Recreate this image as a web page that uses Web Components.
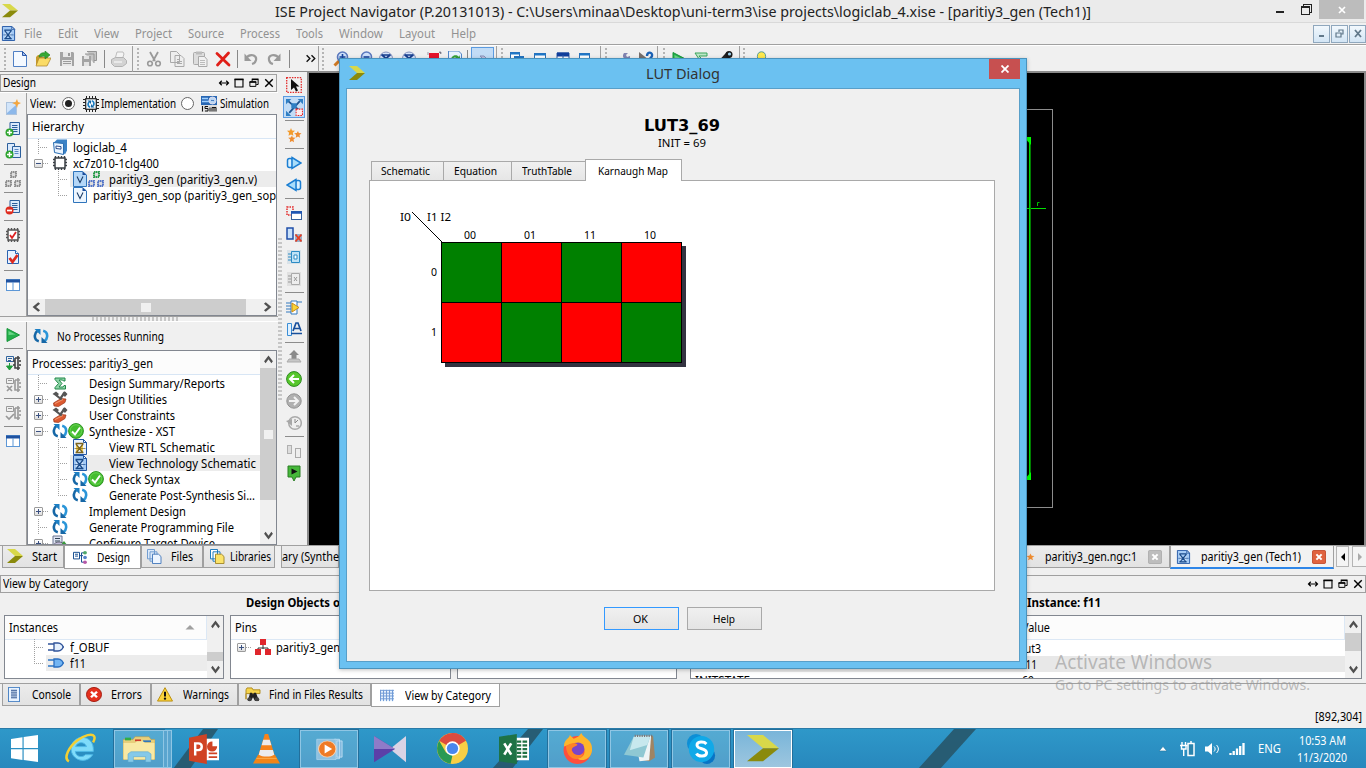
<!DOCTYPE html>
<html lang="en">
<head>
<meta charset="utf-8">
<title>ISE Project Navigator</title>
<style>
html,body{margin:0;padding:0;width:1366px;height:768px;overflow:hidden;background:#f0f0f0}
body{font:12px "Noto Sans","Open Sans",sans-serif;color:#000}
</style>
</head>
<body>
<ise-desktop></ise-desktop>
<script>
const page = (fold, fill) => `<path d="M2.500 1.500h8l3 3v10h-11z" fill="${fill}" stroke="#2a62b0"/><path d="M10.500 1.500v3h3" fill="#fff" stroke="${fold}"/>`;
const textPage = `<path d="M5 1.500h9.500v12H5z" fill="#dbeafc" stroke="#2c5f9c"/><path d="M7 4.500h5.500M7 6.500h5.500M7 8.500h5.500M7 10.500h5.500" stroke="#2c5f9c"/>`;
const plus = `<circle cx="4.500" cy="11.500" r="4" fill="#2fa52f"/><path d="M2 11.500h5M4.500 9v5" stroke="#fff" stroke-width="1.500"/>`;
const chipPins = c => `<path d="M3.500 1v2M6.500 1v2M9.500 1v2M12.500 1v2M3.500 13v2M6.500 13v2M9.500 13v2M12.500 13v2M1 4.500h2M1 7.500h2M1 10.500h2M13 4.500h2M13 7.500h2M13 10.500h2" stroke="${c}" stroke-width="1.400"/><rect x="3" y="3" width="10" height="10" fill="#fff" stroke="${c}" stroke-width="1.500"/>`;
const smallChip = (x, y, c) => `<rect x="${x+1}" y="${y+1}" width="5" height="5" fill="#ddd" stroke="${c}" stroke-width="2" stroke-dasharray="1.500 .5"/>`;
const cycle = `<path d="M5.800 13.300C2.800 12.500 1.600 10 1.900 7.300 2.100 5.300 3 4 4.300 3" fill="none" stroke="#1667a6" stroke-width="2.600"/><path d="M1.500 1h6v6z" fill="#1c7fc4"/><path d="M10.200 2.700c3 .8 4.200 3.300 3.900 6-.2 2-1.100 3.300-2.400 4.300" fill="none" stroke="#2a95d8" stroke-width="2.600"/><path d="M14.500 15h-6V9z" fill="#1667a6"/>`;
const chevron = `<path d="M0 0h8l8 7.500H8z" fill="#d8d84a"/><path d="M8 7.500h8L8 15H0z" fill="#8a8a0c"/>`;
const schem = (c, f, l) => `<path d="M1.500.5h10l3 3v12h-13z" fill="${f}" stroke="#2156a5"/><path d="M11.500.5v3h3z" fill="#fff" stroke="#2156a5"/><path d="M3.500 4.500h8M4 5l3.500 4.500L4 14M11 5L7.500 9.500 11 14M3.500 13.500h8" fill="${c}" stroke="${l}" stroke-width="1.300"/><path d="M2.500 9.500h11" stroke="${l}" stroke-width=".7"/>`;
const zoomGlass = `<path d="M1.500 14.500l6-6" stroke="#d27a22" stroke-width="3"/><circle cx="9.500" cy="6" r="5" fill="#cfe0fa" stroke="#5a78bd" stroke-width="1.600"/>`;
const windowShape = (x,y,w,h) => `<rect x="${x}" y="${y}" width="${w}" height="${h}" fill="#fff" stroke="#2c70b7"/><path d="M${x} ${y+1}h${w}" stroke="#1f78c8" stroke-width="2"/>`;
const ICONS = {
 ise: chevron,
 newDoc: `<path d="M1.500.5h9l4 4v11h-13z" fill="#f4f9ff" stroke="#4f7fc4"/><path d="M10.500.5v4h4z" fill="#9fc0f0" stroke="#2b57a8"/>`,
 open: `<path d="M1 6l2-2h3l1 2h6v8H1z" fill="#c89b2c"/><path d="M1 15l3-8h12l-4 8z" fill="#fadb66" stroke="#a9832c" stroke-width=".7"/><path d="M4 6c0-3 3-5 6-4V0l5 4-5 4V5.500C7.500 5 6 6 4 6z" fill="#35a834" stroke="#1f7d24" stroke-width=".6"/>`,
 save: `<path d="M1 1h13l1 1v13H1z" fill="#a4a4a4"/><path d="M4 1h8v5H4zM3 9h10v6H3z" fill="#e8e8e8"/><path d="M4 10.500h8M4 12.500h8" stroke="#9b9b9b"/><path d="M9 2h2v3H9z" fill="#999"/>`,
 saveAll: `<path d="M6 .5h9.500v9H13M4 3h9v9" fill="#c5c5c5" stroke="#959595"/><path d="M1 5h9v10H1z" fill="#a4a4a4"/><path d="M3 5h5v3H3zM3 11h5v4H3z" fill="#e3e3e3"/>`,
 print: `<path d="M4 8L6 1h6l1 2-2 6z" fill="#f4f4f4" stroke="#bdbdbd"/><path d="M.5 8.500l4-2h8l3 3v3l-4 3h-8l-3-3z" fill="#d3d3d3" stroke="#b2b2b2"/><path d="M3 11h8" stroke="#fff"/>`,
 cut: `<path d="M4 1l5 9M12 1L7 10" stroke="#999" stroke-width="1.800"/><circle cx="4" cy="12.500" r="2.300" fill="none" stroke="#999" stroke-width="1.600"/><circle cx="12" cy="12.500" r="2.300" fill="none" stroke="#999" stroke-width="1.600"/>`,
 copy: `<path d="M1.500.5h6l3 3v8h-9zM6 4.500h6l3 3v8H6z" fill="#eee" stroke="#a9a9a9"/><path d="M8 8.500h3M8 10.500h5M8 12.500h5" stroke="#aaa"/>`,
 paste: `<rect x="1.500" y="1.500" width="11" height="12" rx="1" fill="#ddd" stroke="#aaa"/><path d="M4 .5h6v3H4z" fill="#bbb"/><path d="M6.500 5.500h6l2.500 3v7H6.500z" fill="#f1f1f1" stroke="#a9a9a9"/><path d="M8 9.500h5M8 11.500h5M8 13.500h5" stroke="#bbb"/>`,
 del: `<path d="M2 2.500l12 11.500M13.500 2L2.500 14" stroke="#e01f18" stroke-width="2.800" stroke-linecap="round"/>`,
 undo: `<path d="M3 7c4-5 11-3 10 2-.4 2-2 3.500-4 4" fill="none" stroke="#9a9a9a" stroke-width="2.200"/><path d="M1.500 2.500v7.500h7z" fill="#9a9a9a"/>`,
 redo: `<path d="M13 7C9 2 2 4 3 9c.4 2 2 3.500 4 4" fill="none" stroke="#9a9a9a" stroke-width="2.200"/><path d="M14.500 2.500v7.500h-7z" fill="#9a9a9a"/>`,
 more: `<path d="M2 4l4 4-4 4M8 4l4 4-4 4" fill="none" stroke="#111" stroke-width="1.700"/>`,
 zoomIn: zoomGlass + `<path d="M6.500 6h6M9.500 3v6" stroke="#17439d" stroke-width="1.600"/>`,
 zoomOut: zoomGlass + `<path d="M6.500 6h6" stroke="#17439d" stroke-width="1.600"/>`,
 zoomFit: `<circle cx="8" cy="7.500" r="6.500" fill="#d6e4fa" stroke="#8592bd"/><path d="M3.500 3.500l9 8M12.500 3.500l-9 8M4 4h8" stroke="#183f8f" stroke-width="1.700"/>`,
 stopRed: `<path d="M3 2h10v10H3z" fill="#e4142c"/><path d="M2 1v3M13 1h2v2" stroke="#99a"/>`,
 refreshDoc: `<path d="M1.500 0h10l3 3v12h-13z" fill="#e8f2ff" stroke="#5386c7"/><path d="M4 9c0-5 6-6 8-3l1-2v5H8l2-1.500C8 6 6 6 6 9z" fill="#36a03a"/>`,
 arrowPale: `<path d="M5 5h4l5 5-5 5H5l5-5z" fill="#c0c0df" stroke="#8790b9"/>`,
 cascade: windowShape(1.500,1.500,9,7)+windowShape(5.500,5.500,9,8),
 winOne: windowShape(2.500,2.500,11,10),
 winSplit: `<path d="M2 2h12v12H2z" fill="#fff" stroke="#2a5ba6"/><path d="M2 3.500h12" stroke="#123e9b" stroke-width="4"/><path d="M8 4v10" stroke="#2a5ba6"/>`,
 winOut: windowShape(1.500,2.500,10,7)+`<path d="M9 8h6v5H9z" fill="#fff" stroke="#2c70b7"/>`,
 wrench: `<path d="M3 15l6-7" stroke="#8588b5" stroke-width="3"/><path d="M8 2c-3 4 1 8 6 6V5l-3 1-1-2 2-2z" fill="#8184b1"/>`,
 whatsThis: `<path d="M1 1v12l4-3 2 4 2-1-2-4h4z" fill="#77706c"/><path d="M9 5c0-5 6-4 5 0-.5 2-2.500 2-2.500 4" fill="none" stroke="#1b61b4" stroke-width="2.400"/>`,
 play: `<path d="M2 1.500L14.500 8 2 14.500z" fill="#24b04b" stroke="#17963a"/><path d="M3.500 4l7 3.500-7 .5z" fill="#6bd688"/>`,
 sigmaTop: `<path d="M2 2h12v3H6l3 3-3 4h8v2H2l4-6z" fill="#bce7c8" stroke="#3aa45b"/>`,
 flashlight: `<path d="M2 14L12 3" stroke="#222" stroke-width="6"/><circle cx="12" cy="3.500" r="3.500" fill="#1a1a1a"/><circle cx="12.500" cy="3" r="1.600" fill="#9fd3ee"/>`,
 bulb: `<path d="M5 13c0-3-3-4-3-7.500C2 2 5 .8 8 .8s6 1.200 6 4.700C14 9 11 10 11 13z" fill="#ffe84d" stroke="#3b8fa0"/><path d="M5 14h6" stroke="#888" stroke-width="2"/>`,
 dots: `<path d="M8 0v16" stroke="#b4b4b4" stroke-width="4" stroke-dasharray="1.400 1.500"/>`,
 newSource: `<rect x="1.500" y="3.500" width="10" height="12" fill="#8db8ea" stroke="#adc3dd"/><path d="M2 4l9 0v2L2 14z" fill="#d2e5fa"/><path d="M12 0l1 3 3 1-3 1.500L12 9l-1.500-3.500L7 4l3.500-1z" fill="#f4a63f"/>`,
 addSource: textPage + plus,
 addCopy: `<path d="M2.500.5h7v11h-7z" fill="#dbeafc" stroke="#2c5f9c"/><path d="M7.500 3.500h8v11h-8z" fill="#dbeafc" stroke="#2c5f9c"/><path d="M9.500 6.500h4M9.500 8.500h4M9.500 10.500h4" stroke="#5a8ac4"/>` + plus,
 hierGrey: smallChip(5,0,'#8e8e8e')+smallChip(0,9,'#8e8e8e')+smallChip(9,9,'#8e8e8e'),
 remove: textPage + `<circle cx="4.500" cy="11.500" r="4" fill="#df2c1f"/><path d="M2 11.500h5" stroke="#fff" stroke-width="1.700"/>`,
 chipCheck: chipPins('#555') + `<path d="M5 8l2 3 4-6" fill="none" stroke="#d22" stroke-width="1.800"/>`,
 chip: chipPins('#3a3f44'),
 docCheck: page('#2a62b0','#e8f2ff') + `<path d="M4.500 9l3 4 5-7" fill="none" stroke="#dd2b20" stroke-width="2.800"/>`,
 columns: `<rect x="1.500" y="2.500" width="13" height="11" fill="#fff" stroke="#5d97d6"/><path d="M1 4h14" stroke="#1f52a0" stroke-width="3"/><path d="M8 5v9" stroke="#5d97d6"/>`,
 impl: `<path d="M3.500 0v3M6.500 0v3M9.500 0v3M12.500 0v3M3.500 13v3M6.500 13v3M9.500 13v3M12.500 13v3M0 3.500h3M0 6.500h3M0 9.500h3M0 12.500h3M13 3.500h3M13 6.500h3M13 9.500h3M13 12.500h3" stroke="#222"/><rect x="2.700" y="2.700" width="10.600" height="10.600" fill="#f2f8fd" stroke="#222" stroke-width="1.200"/><path d="M7.200 11.300C4.500 10.500 4.700 7.500 6 6M8.800 4.700c2.700.8 2.500 3.800 1.200 5.300" fill="none" stroke="#1c7fc4" stroke-width="1.700"/><path d="M4.500 4.500H8V8zM11.500 11.500H8V8z" fill="#1667a6"/>`,
 sim: `<rect width="16" height="9" fill="#2867b4"/><path d="M1 2.500h6M1 5.500h7" stroke="#9ed0ff" stroke-width="1.500"/><circle cx="11.500" cy="4.500" r="3.500" fill="#bdd7f3" stroke="#dde"/><path d="M10 5c1-2 2 1 3-1" stroke="#2867b4" fill="none"/><rect y="9" width="16" height="7" fill="#ddd"/><path d="M1.500 10v5.500M7 10.500H4v2h3v2.500H4M9 15.500v-4M11 15.500v-4h4v4M13 12v3.500" fill="none" stroke="#111"/>`,
 project: `<path d="M2 3.500l3-3h10v11l-2 4z" fill="#3b82c6"/><path d="M1.500 3.500l10 1v11l-9-2z" fill="#e9f4ff" stroke="#2a6eb2"/><path d="M4 7l5 .6v2.500L4 9.500z" fill="#fff" stroke="#2a4d8e"/>`,
 verilog: `<path d="M1.500.5h9l4 3.500v11.500h-13z" fill="#b4d7f8" stroke="#2f74bb"/><path d="M10.500.5V4h4z" fill="#1b4d9c"/><path d="M5 5.500l3 6 3-6" fill="none" stroke="#1c3d68" stroke-width="1.100"/>`,
 verilogW: `<path d="M1.500.5h9l4 3.500v11.500h-13z" fill="#edf6ff" stroke="#2f74bb"/><path d="M10.500.5V4h4z" fill="#1b4d9c"/><path d="M5 5.500l3 6 3-6" fill="none" stroke="#1c3d68" stroke-width="1.100"/>`,
 hier: smallChip(5,0,'#2a9c4a')+smallChip(0,9,'#5677c8')+smallChip(9,9,'#5677c8'),
 cycle, 
 sigma: `<path d="M3 3h10v3h-1.500l-1-1H7l3 3.500L7 12h4l1-1.500h1.500V14H3v-1.500L6.500 8.500 3 4.500z" fill="#8fd6a8" stroke="#23874a"/>`,
 tools: `<path d="M1.500 12L9 7.500l5 .5-1 3.500L6.500 15.500 2 15z" fill="#dd5a30" stroke="#9a3418" stroke-width=".7"/><path d="M4 4l6 5M13 1L8 8" stroke="#555" stroke-width="2.200"/><path d="M.5 3L4 .5 7 3 4.500 5.500zM10.500 2L13 .5 15.500 3 13 6l-1.500-1.500z" fill="#555"/><path d="M3 12.500l8-4" stroke="#f59a72"/>`,
 check: `<circle cx="8" cy="8" r="7.400" fill="#44bd2f" stroke="#2b9420"/><circle cx="8" cy="7.500" r="5.800" fill="none" stroke="#79dd61" stroke-width=".7"/><path d="M4 8.500l3 3 5-7" fill="none" stroke="#fff" stroke-width="2"/>`,
 rtl: schem('#f6cf4e','#eaf3ff','#7b6420'), tech: schem('#cfe3fb','#a5cbf5','#1b4b8a'),
 config: `<path d="M1 1h9v9H1z" fill="#dfe4f3" stroke="#6a7590"/><path d="M3 3.500h5M3 6h5" stroke="#345"/><ellipse cx="7" cy="10" rx="5" ry="3" fill="#c3bcdc" stroke="#667"/><path d="M12 6l4 5h-8z" fill="#399a3c"/>`,
 procGo: `<path d="M1.500 1.500h7v5h-7zM3 3.500h4M3 5.500h3" fill="none" stroke="#31659e"/><path d="M10 3h5M10 3v10h5M13 1v14" fill="none" stroke="#444" stroke-width="1.600"/><path d="M15 5v2M15 9v2M9 5v2M9 9v2" stroke="#444" stroke-width="1.600"/><path d="M4.500 8v5M1.500 11l3 4 3-4z" fill="#1f9b3a" stroke="#1f9b3a"/>`,
 procX: `<path d="M1.500 1.500h7v5h-7zM3 3.500h4" fill="none" stroke="#999"/><path d="M10 3h5M10 3v10h5M13 1v14M15 5v2M15 9v2" fill="none" stroke="#999" stroke-width="1.600"/><path d="M2 9l5 5M7 9l-5 5" stroke="#999" stroke-width="1.700"/>`,
 procOk: `<path d="M1.500 1.500h7v5h-7zM3 3.500h4" fill="none" stroke="#999"/><path d="M10 3h5M10 3v10h5M13 1v14M15 5v2M15 9v2" fill="none" stroke="#999" stroke-width="1.600"/><path d="M1 11l3 3 5-5" fill="none" stroke="#999" stroke-width="1.700"/>`,
 pointer: `<rect x=".7" y=".7" width="14.600" height="14.600" fill="none" stroke="#e22b2b" stroke-width="1.300" stroke-dasharray="1.500 1.100"/><path d="M5 2v11l3-2.500 2 4 2-1-2-4h3.500z" fill="#111"/>`,
 spread: `<path d="M2 2l11 9M13 2L3 13" stroke="#1e5391" stroke-width="1.700"/><path d="M0 0h5L0 5zM16 0h-5l5 5zM0 16h5l-5-5zM5 4h5v5H5z" fill="#2f7fc4"/><rect x="9.500" y="9.500" width="6" height="6" fill="#fee" stroke="#e22" stroke-dasharray="1.500 1"/>`,
 stars: `<path d="M5 1l1 2.500 3 .3-2.200 2 .6 3L5 7.500l-2.500 1.300.6-3L1 3.800l3-.3z" fill="#f39b2b"/><path d="M12 4l.8 2 2.700.3-2 1.700.5 2.700-2-1.200-2.300 1.200.5-2.700-2-1.700 2.600-.3zM6 8.500l.8 2 2.700.3-2 1.700.5 2.700-2-1.200-2.300 1.200.5-2.700-2-1.700 2.600-.3z" fill="#ee8c30"/>`,
 star: `<path d="M8 1l2 4.500 5 .5-4 3.500 1.500 5L8 12l-4.500 2.500 1.500-5L1 6l5-.5z" fill="#ee8c30"/>`,
 fwd: `<rect x="1.500" y="3.500" width="5" height="9" rx="2" fill="#d9f1ff" stroke="#1b7ed2" stroke-width="1.500"/><path d="M6 2.500L15 8 6 13.500z" fill="#a9ddfa" stroke="#1b7ed2" stroke-width="1.500"/>`,
 back: `<rect x="9.500" y="3.500" width="5" height="9" rx="2" fill="#d9f1ff" stroke="#1b7ed2" stroke-width="1.500"/><path d="M10 2.500L1 8l9 5.500z" fill="#a9ddfa" stroke="#1b7ed2" stroke-width="1.500"/>`,
 boxWin: `<rect x="1" y="2" width="6" height="8" fill="none" stroke="#e22b2b" stroke-width="1.500" stroke-dasharray="1.500 1"/><rect x="5.500" y="6.500" width="10" height="8" fill="#fff" stroke="#355f9c"/><path d="M5 7.500h11" stroke="#1f56b4" stroke-width="2.500"/>`,
 boxX: `<rect x="1" y="1" width="6" height="11" fill="#c9e1fa" stroke="#1f4ea8" stroke-width="1.500"/><rect x="9" y="7" width="7" height="8" fill="#9ab0c8"/><path d="M9.500 7.500l6 7M15.500 7.500l-6 7" stroke="#ea3d20" stroke-width="1.800"/>`,
 chipIn: `<path d="M1 1h14v14H1z" fill="#d9e2e8"/><path d="M2 5h4M2 8h4M2 11h4" stroke="#2c8bc4"/><path d="M5.500 2.500h8v11h-8z" fill="#bfe2f6" stroke="#2c8bc4"/><path d="M8 6h3v4H8z" fill="#fff" stroke="#2c8bc4"/>`,
 chipInG: `<path d="M1 1h14v14H1z" fill="#e0e0e0"/><path d="M2 5h4M2 8h4M2 11h4" stroke="#999"/><path d="M5.500 2.500h8v11h-8z" fill="#eee" stroke="#aaa"/><path d="M8 6l3 4M11 6l-3 4" stroke="#999"/>`,
 gate: `<path d="M0 4h5M0 7h5M0 10h5M0 13h5M11 3h5" stroke="#3378be"/><path d="M5 2h6v13H5z" fill="#fff" stroke="#3378be"/><path d="M6 4l7 4.500L6 13z" fill="#f7d438" stroke="#cc8a17"/>`,
 label: `<path d="M1.500 2.500h4v12h-4z" fill="#dff0ff" stroke="#3a8ed6"/><path d="M7 10l3-8h2l3 8M8.500 7.500h5M5 12.500h11" fill="none" stroke="#174f9c" stroke-width="1.700"/>`,
 up: `<path d="M8 1l5 5h-2.500v5h-5V6H3z" fill="#8a8a8a"/><path d="M1 13l2-3h10l2 3z" fill="#c7c7c7" stroke="#aaa"/>`,
 left: `<circle cx="8" cy="8" r="7.400" fill="#57c72c" stroke="#2e8a21"/><path d="M13 8H4M8 4L4 8l4 4" fill="none" stroke="#fff" stroke-width="2"/>`,
 right: `<circle cx="8" cy="8" r="7.200" fill="#b0b0b0" stroke="#929292"/><path d="M3 8h9M8 4l4 4-4 4" fill="none" stroke="#f2f2f2" stroke-width="2"/>`,
 history: `<circle cx="9" cy="8" r="6.300" fill="#eee" stroke="#aaa" stroke-width="1.500"/><path d="M9 4v4l3-3M10 11h3" fill="none" stroke="#888"/><path d="M0 6l6-2v7z" fill="#a7a7a7"/>`,
 pair: `<rect x="1.500" y="2.500" width="4" height="8" fill="#ddd" stroke="#b0b0b0"/><rect x="9.500" y="5.500" width="5" height="9" fill="#eee" stroke="#aaa"/>`,
 pin: `<path d="M2 1h12v11h-4l-2 4-2-4H2z" fill="#46b83a" stroke="#2b7e25"/><path d="M5.500 3.500l6 3-6 3z" fill="#111"/>`,
 designTab: `<path d="M1.500 2.500h6v7h-6z" fill="#fff" stroke="#174d8f"/><path d="M3 4.500h3M3 6.500h3M8 6h3M9.500 6v-3M9.500 3h3M9.500 6v7h3" fill="none" stroke="#174d8f"/><circle cx="13" cy="3" r="1.900" fill="#50a86a"/><circle cx="13" cy="8" r="1.900" fill="#5683cb"/><circle cx="13" cy="13" r="1.900" fill="#b557a7"/>`,
 files: `<path d="M1.500.5h7v10h-7zM4 3h7v10H4z" fill="#dceafa" stroke="#6f9bd0"/><path d="M6.500 5.500h6l2.500 2.500v7.500H6.500z" fill="#edf5ff" stroke="#4a7dbd"/>`,
 libs: `<path d="M1.500.5h7v10h-7zM4 3h7v10H4z" fill="#fff" stroke="#1a78bd"/><path d="M6.500 5.500h6l2.500 2.500v7.500H6.500z" fill="#fbe36a" stroke="#a58a2c"/>`,
 nor: `<path d="M0 5h7M0 11h7M13 8h3" stroke="#31549a" stroke-width="1.500"/><path d="M6 4h4c3 0 5 2.500 5 4s-2 4-5 4H6z" fill="#e5f0fd" stroke="#31549a" stroke-width="1.300"/>`,
 norSel: `<path d="M0 5h7M0 11h7M13 8h3" stroke="#2a76c6" stroke-width="1.500"/><path d="M6 4h4c3 0 5 2.500 5 4s-2 4-5 4H6z" fill="#73b5f3" stroke="#2a6ec0" stroke-width="1.300"/>`,
 pins: `<path d="M8 6v4M3 11V9h10v2" fill="none" stroke="#333"/><rect x="5" y="0" width="6" height="6" fill="#e0262c"/><rect x="0" y="10" width="6" height="6" fill="#e0262c"/><rect x="10" y="10" width="6" height="6" fill="#e0262c"/>`,
 console: `<rect x="2.500" y=".5" width="11" height="15" fill="#e8f3ff" stroke="#4f86c6"/><path d="M5 3.500h6M5 5.500h6M5 7.500h6M5 9.500h6M5 11.500h6" stroke="#274e8c"/>`,
 error: `<circle cx="8" cy="8" r="7.500" fill="#e5301d" stroke="#a31b10"/><path d="M5 5l6 6M11 5l-6 6" stroke="#fff" stroke-width="2.400"/>`,
 warn: `<path d="M8 .7L15.500 15H.5z" fill="#fbd43c" stroke="#b98d10"/><path d="M8 5v5" stroke="#111" stroke-width="2"/><circle cx="8" cy="12.500" r="1.200" fill="#111"/>`,
 find: `<path d="M1 3l1-2h5l1 2h7v4H1v6z" fill="#f6d44b" stroke="#b18c20"/><path d="M3 15l2-9h2l1 2 1-2h2l3 9h-4l-2-4-2 4z" fill="#222"/><circle cx="4.500" cy="13" r="2.200" fill="#444"/><circle cx="12" cy="13" r="2.200" fill="#444"/>`,
 grid: `<rect x="1" y="2" width="14" height="12" fill="#e6f1fd"/><path d="M1 2.500h14M1 5.500h14M1 8.500h14M1 11.500h14M1.500 2v12M4.500 2v12M7.500 2v12M10.500 2v12M13.500 2v12" stroke="#6f9ad6"/>`,
 xGrey: `<rect x=".5" y=".5" width="15" height="15" rx="1.500" fill="#bdbdbd" stroke="#aaa"/><path d="M5 5l6 6M11 5l-6 6" stroke="#fff" stroke-width="2.400"/>`,
 xRed: `<rect x=".5" y=".5" width="15" height="15" rx="1.500" fill="#e0633f" stroke="#c04425"/><path d="M5 5l6 6M11 5l-6 6" stroke="#fff" stroke-width="2.400"/>`,
 fit: `<path d="M2 8h12M5 5L2 8l3 3M11 5l3 3-3 3" fill="none" stroke="#000" stroke-width="1.600"/>`,
 max: `<path d="M2.700 3h10.600v10.300H2.700z" fill="none" stroke="#000" stroke-width="1.500"/><path d="M2 3.300h12" stroke="#000" stroke-width="2"/>`,
 restore: `<path d="M5.500 6V3.500h8v6.500H11M2.500 6.500h8v6h-8z" fill="none" stroke="#000" stroke-width="1.300"/><path d="M5 3h9M2 6.500h9" stroke="#000" stroke-width="2"/>`,
 close: `<path d="M3 3l10 10M13 3L3 13" stroke="#000" stroke-width="1.900"/>`,
 up2: `<path d="M3.500 10.500L8 6l4.500 4.500" fill="none" stroke="#505050" stroke-width="2.600"/>`,
 down2: `<path d="M3.500 5.500L8 10l4.500-4.500" fill="none" stroke="#505050" stroke-width="2.600"/>`,
 left2: `<path d="M10.500 3.500L6 8l4.500 4.500" fill="none" stroke="#505050" stroke-width="2.400"/>`,
 right2: `<path d="M5.500 3.500L10 8l-4.500 4.500" fill="none" stroke="#505050" stroke-width="2.400"/>`,
 windows: `<path d="M0 2.300L6.800 1.300v6.400H0zM7.500 1.200L16 0v7.700H7.500zM0 8.400h6.800v6.400L0 13.800zM7.500 8.400H16V16l-8.500-1.200z" fill="#fff"/>`,
 ie: `<path d="M8.300 2.200a6 6 0 1 0 6 9h-3.800c-1.500 1.700-4.900 1.200-5.200-1.700h9.300C15 5 12.500 2.200 8.300 2.200zM5.500 7c.6-2.600 4.800-2.800 5.600 0z" fill="#7fdcfa" stroke="#4db8e6" stroke-width=".5"/><path d="M2 14.700C-1 13 2 7 6.500 3.700 10 1.200 14 0 15 1.600c.5.800.2 2-.5 3.200" fill="none" stroke="#f3cf33" stroke-width="1.300"/>`,
 explorer: `<path d="M0 3h5l1-1.500h7L14 3h2v11H0z" fill="#e7cf7b" stroke="#b89c48" stroke-width=".3"/><path d="M1 2h3v1.500H1z" fill="#32ad44"/><path d="M6 3h3v1H6z" fill="#cf3b2c"/><path d="M10 3.500h4v1h-4z" fill="#2e77bd"/><path d="M.3 5H6l1-1h3l1 1h4.700v9H.3z" fill="#f8e9a4"/><path d="M2.500 15.500V11l1.500-1.200h8.500L14 11v4.500h-2.700v-3H5.200v3z" fill="#85c9e8" stroke="#5aa6cf" stroke-width=".3"/>`,
 ppt: `<rect x="9" y="2.500" width="7" height="11.500" fill="#fff"/><path d="M0 2L9.500 0v16L0 14.200z" fill="#d04324"/><path d="M3.300 11.500v-6.500h1.700c2.400 0 2.400 3.600 0 3.600H3.300" fill="none" stroke="#fff" stroke-width="1.300"/><path d="M12.500 4v2.500H15A2.700 2.700 0 1 1 12.500 4z" fill="#d04324"/><path d="M10.500 10.300H15M10.500 12.300H15" stroke="#d04324"/>`,
 vlc: `<path d="M3 11h10l3 4.700H0z" fill="#f28518"/><path d="M2 13h12" stroke="#ffb04f" stroke-width=".5"/><path d="M7 0h2l3.700 11c-2 2-7.300 2-9.400 0z" fill="#f6831a"/><path d="M6.100 3h3.800l1 3H5.100zM4.200 8.500h7.600l.8 2.500c-2 1.400-7 1.400-9.200 0z" fill="#ececec"/>`,
 media: `<path d="M11 2h3v12h-3zM12.500 3h3v10h-3z" fill="#83badf" stroke="#d4ecfb" stroke-width=".4"/><path d="M1 2h11v12.500H1z" fill="#8dc0e0" stroke="#b3d8ee" stroke-width=".4"/><circle cx="7" cy="8" r="5" fill="#ef7a24" stroke="#f7d3b4" stroke-width=".6"/><path d="M5.500 5.200L9.800 8l-4.300 2.800z" fill="#fff"/>`,
 km: `<path d="M16 .5v15L8 8z" fill="#d9d3e5"/><path d="M0 .5L10.500 8 0 15.500z" fill="#5b3fa8"/><path d="M0 .5L10.500 8 0 8z" fill="#8f7bc8"/>`,
 chrome: `<circle cx="8" cy="8" r="8" fill="#f8cf45"/><path d="M8 8L1.100 4A8 8 0 0 1 14.900 4z" fill="#dc4b3f"/><path d="M8 0a8 8 0 0 1 6.900 4H8z" fill="#dc4b3f"/><path d="M1.100 4L4.600 10 8 11.500 7 15.900A8 8 0 0 1 1.100 4z" fill="#2a9a54"/><circle cx="8" cy="8" r="3.700" fill="#fff"/><circle cx="8" cy="8" r="2.900" fill="#4a87ee"/>`,
 excel: `<rect x="8.500" y="2" width="7.500" height="12" fill="#fff"/><path d="M9.500 4H15M9.500 6H15M9.500 8H15M9.500 10H15M9.500 12H15" stroke="#207245" stroke-width="1.200"/><path d="M12.200 3v10" stroke="#fff" stroke-width=".7"/><path d="M0 1.500L9.500 0v16L0 14.500z" fill="#1e7346"/><path d="M2.800 5l3.700 6M6.500 5l-3.700 6" stroke="#fff" stroke-width="1.400"/>`,
 firefox: `<circle cx="8" cy="8.800" r="7.200" fill="#ff4f3c"/><path d="M1 7C1 3 4 3 4 1l2 2c3-1 3-2 4-3 1 3 6 3 5.500 9-.5 5-6 6-7.500 4 5 0 5-7-1-8z" fill="#ffb52b"/><circle cx="8.300" cy="8.200" r="3.300" fill="#7b45c9"/><path d="M2 7c2-2 5-2 6-1-1 1-3 1-3 3 1 3 5 3 6 1 0 4-8 6-9-3z" fill="#ff8326"/>`,
 notepad: `<path d="M6 1h9l1 12-3 2-4-.5z" fill="#9f8464"/><path d="M5.500 1H14l-1 13.500-5 .5z" fill="#eef4f6"/><path d="M5 1.500h8.500L10 13 0 11.500z" fill="#8fc8d3"/><path d="M5 1.500h8.500L12 6 3 9z" fill="#c7e8ee"/><path d="M5.500 1h9" stroke="#777" stroke-width="1.200" stroke-dasharray=".6 .6"/>`,
 skype: `<circle cx="5" cy="5" r="5" fill="#0d8fd6"/><circle cx="11" cy="11.500" r="4.500" fill="#0874c5"/><circle cx="8" cy="8" r="7" fill="#10a9e8"/><path d="M10.700 5.300C9.300 3.700 5.400 4 5.500 6c.2 2.500 5.300 1.300 5.300 4 0 2.200-4.500 2.400-5.600.4" fill="none" stroke="#fff" stroke-width="1.600"/>`,
 trayUp: `<path d="M2 11L8 4l6 7z" fill="#fff" stroke="#1b6c96" stroke-width=".8"/>`,
 battery: `<rect x="8" y="2.500" width="6" height="12" fill="#2b83ad" stroke="#fff" stroke-width="1.500"/><path d="M10 1h2" stroke="#fff" stroke-width="1.500"/><path d="M2 1v3M5.500 1v3M0 4.500h7.500M1.500 5v3h4.500V5M3.700 8v7" fill="none" stroke="#fff" stroke-width="1.400"/>`,
 speaker: `<path d="M1 5.500h3L8 2v12l-4-3.500H1z" fill="#fff"/><path d="M10 5.500c1.500 1.500 1.500 3.500 0 5M12.500 4c2.500 2.500 2.500 5.500 0 8" fill="none" stroke="#fff"/>`,
 signal: `<path d="M1.500 14v-2M4.700 14v-4M8 14V7.500M11.200 14V5M14.500 14V2" stroke="#fff" stroke-width="2.300"/>`,
 tri: `<path d="M8 4l6 6H2z" fill="#a0a0a0"/>`
};

/* Element whose shadow root is filled from its own render() */
class Base extends HTMLElement {
  connectedCallback() {
    if (this.shadowRoot) return;
    this.attachShadow({mode: 'open'}).innerHTML = `<style>:host{display:block;box-sizing:border-box}*{box-sizing:border-box}${this.css ? this.css() : ''}</style>` + this.render();
    if (this.ready) this.ready();
  }
  a(name, fallback = '') { return this.getAttribute(name) ?? fallback; }
}
const def = (n, c) => customElements.define(n, c);

/* Label condensed or widened so that it fills a given width */
def('fit-text', class extends Base {
  css() { return `:host{display:inline-block;white-space:pre;flex:none}span{display:inline-block;transform-origin:0 50%}`; }
  render() { return `<span><slot></slot></span>`; }
  ready() {
    const want = +this.a('w', 0); if (!want) return;
    const span = this.shadowRoot.querySelector('span');
    span.style.transform = `scaleX(${want / span.getBoundingClientRect().width})`;
    this.style.width = want + 'px';
  }
});
const T = (w, s) => `<fit-text w="${w}">${s}</fit-text>`;

def('ui-icon', class extends Base {
  css() { const w = this.a('w', 16), h = this.a('h', w); return `:host{width:${w}px;height:${h}px;flex:none}svg{display:block}`; }
  render() { const w = this.a('w', 16), h = this.a('h', w); return `<svg width="${w}" height="${h}" viewBox="0 0 16 16" preserveAspectRatio="none">${ICONS[this.a('name')]}</svg>`; }
});
const I = (n, w = 16, h = w) => `<ui-icon name="${n}" w="${w}" h="${h}"></ui-icon>`;

def('title-bar', class extends Base {
  css() { return `:host{height:23px;background:#ebebeb;border-bottom:1px solid #d9d9d9;display:flex;align-items:center;padding-left:2px;color:#222;font-size:15px}
   .t{margin-left:257px;flex:1}.b{display:flex;height:22px;align-items:flex-start}.m{width:8px;height:2px;background:#222;margin:11px 17px 0 0}
   .r{width:9px;height:9px;border:1px solid #222;border-top-width:2px;margin:6px 9px 0 0;box-shadow:2px -2px 0 -1px #ebebeb,2px -2px 0 0 #222}
   .x{width:45px;height:19px;background:#bcbcbc;display:grid;place-items:center;margin-right:2px}.x svg{display:block}`; }
  render() { return `${I('ise',16,14)}<div class="t">${T(816,'ISE Project Navigator (P.20131013) - C:\\Users\\minaa\\Desktop\\uni-term3\\ise projects\\logiclab_4.xise - [paritiy3_gen (Tech1)]')}</div>
   <div class="b"><i class="m"></i><i class="r"></i><div class="x"><svg width="8" height="8"><path d="M1 1l6 6M7 1L1 7" stroke="#fff" stroke-width="1.700"/></svg></div></div>`; }
});

def('menu-bar', class extends Base {
  css() { return `:host{height:22px;display:flex;align-items:center;padding-left:1px;color:#929292;border-bottom:1px solid #a0a0a0}
   fit-text{margin-right:16px}ui-icon{margin-right:8px}
   .w{margin-left:auto;display:flex;gap:1px}.w div{width:17px;height:18px;border:1px solid #8fa7bd;background:linear-gradient(#f2f8fd,#d3e5f5);display:grid;place-items:center}svg{display:block}`; }
  render() {
    const m = [['File',18],['Edit',20],['View',25],['Project',37],['Source',36],['Process',40],['Tools',27],['Window',44],['Layout',36],['Help',25]];
    const g = ['<path d="M2 8h5" stroke="#61788a" stroke-width="2"/>','<path d="M1 5h5v4H1zM4 4V2h4v4H6" fill="none" stroke="#61788a" stroke-width="1.200"/>','<path d="M2 2l6 7M8 2L2 9" stroke="#61788a" stroke-width="1.800"/>'];
    return I('tech',15,15) + m.map(([s,w]) => T(w,s)).join('') + `<div class="w">${g.map(p => `<div><svg width="10" height="11">${p}</svg></div>`).join('')}</div>`;
  }
});

def('tool-bar', class extends Base {
  css() { return `:host{height:27px;display:flex;align-items:center;border-bottom:1px solid #8c8c8c;border-top:1px solid #fff}
   div{flex:none;height:26px;display:grid;place-items:center}.s i{width:1px;height:18px;background:#888}.g i{width:1px;height:26px;background:#a0a0a0}.on{background:#c2dcf6;border:1px solid #5b9be0;height:24px}`; }
  render() {
    const L = [['dots',9],['newDoc',22],['open',24],['save',23],['saveAll',22],['|',8],['print',22],['||',4],['dots',8],['cut',24],['copy',22],['paste',24],['del',22],['|',6],['undo',22],['redo',24],['|',6],['',13],['more',12],['||',2],['dots',8],['zoomIn',28],['zoomOut',20],['zoomFit',22],['zoomFit',24],['stopRed',25],['refreshDoc',17],['|',8],['arrowPale',23,1],['||',4],['dots',8],['cascade',22],['winOne',24],['winSplit',22],['winOut',24],['||',4],['dots',8],['wrench',28],['whatsThis',16],['||',6],['dots',8],['play',22],['sigmaTop',22],['flashlight',26],['||',2],['dots',8],['bulb',26]];
    return L.map(([n,w,on]) => n === '|' ? `<div class="s" style="width:${w}px"><i></i></div>` : n === '||' ? `<div class="g" style="width:${w}px"><i></i></div>` :
      `<div ${on?'class="on"':''} style="width:${w}px">${n ? I(n, n==='more'?13:n==='bulb'?11:n==='dots'?8:16, n==='dots'?22:n==='more'?13:16) : ''}</div>`).join('');
  }
});

def('tool-strip', class extends Base {
  css() { return `:host{display:flex;flex-direction:column;align-items:center;flex:none}
   div{width:22px;height:22px;display:grid;place-items:center;flex:none}i{width:19px;height:6px;flex:none;background:linear-gradient(#8c8c8c,#8c8c8c) 0 2px/100% 1px no-repeat}.on{background:#c2dcf6;border:1px solid #5b9be0}`; }
  render() { return this.a('items').split(' ').map(n => n === '-' ? '<i></i>' : n[0] === '*' ? `<div class="on">${I(n.slice(1),17)}</div>` : `<div>${I(n, 16)}</div>`).join(''); }
});

def('dock-title', class extends Base {
  css() { return `:host{display:flex;align-items:center;height:18px;border:1px solid #a0a0a0;padding:0 1px 0 2px;flex:none}span{flex:1;line-height:14px}ui-icon{margin-left:3px}`; }
  render() { return `<span>${T(this.a('w'), this.a('label'))}</span>` + ['fit','max','restore','close'].map(n => I(n,12)).join(''); }
});

def('tree-row', class extends Base {
  css() { return `:host{display:flex;height:16px;align-items:center;flex:none;position:relative}
   .e{width:9px;height:9px;border:1px solid #9b9b9b;background:linear-gradient(#fff,#ddd);border-radius:1px;flex:none}
   .e svg{display:block}.d{width:10px;height:1px;background:repeating-linear-gradient(90deg,#a0a0a0 0 1px,transparent 1px 2px);flex:none}
   .v{position:absolute;top:0;bottom:0;width:1px;background:repeating-linear-gradient(#a0a0a0 0 1px,transparent 1px 2px)}
   .bg{display:flex;align-items:center;height:16px;flex:1}.sel{background:#ececec}.sp{flex:none}`; }
  render() {
    const base = +this.a('base', 3), level = +this.a('level', 0), x = base + level * 20, exp = this.a('exp');
    const box = exp ? `<div class="e" style="margin-left:3px"><svg width="7" height="7"><path d="M1 3.500h5${exp==='+'?'M3.500 1v5':''}" stroke="#3a5080"/></svg></div><div class="d" style="width:5px"></div>` : `<div class="d" style="margin-left:7px"></div>`;
    const ics = this.a('icons').split(' ').map(n => I(n, 16)).join('');
    const iconX = x + 22;
    const line = this.hasAttribute('last') ? `<i class="v" style="left:${x+7}px;bottom:8px"></i>` : `<i class="v" style="left:${x+7}px"></i>`;
    return (exp ? '' : line) + (level && !this.hasAttribute('single') ? `<i class="v" style="left:${base+7}px"></i>` : '') +
     `<div class="sp" style="width:${x}px"></div>${box}<div class="bg ${this.hasAttribute('sel')?'sel':''}" style="margin-left:2px;padding-left:2px"><div style="display:flex;gap:0;width:${+this.a('tx') - iconX + 1}px;flex:none">${ics}</div>${T(this.a('w'), this.a('label'))}</div>`;
  }
});
const row = (level, exp, icons, tx, w, label, extra = '') => `<tree-row level="${level}" exp="${exp}" icons="${icons}" tx="${tx}" w="${w}" label="${label}" ${extra}></tree-row>`;

def('scroll-y', class extends Base {
  css() { return `:host{width:16px;display:flex;flex-direction:column;align-items:center;background:#f0f0f0;flex:none}
   .k{width:16px;background:#cdcdcd;display:grid;place-items:center;margin-top:${this.a('top',0)}px;height:${this.a('len')}px}.k i{width:9px;height:9px;background:#f0f0f0}ui-icon:last-child{margin-top:auto}`; }
  render() { return I('up2',13,+this.a('cap',17)) + `<div class="k">${this.hasAttribute('grip')?'<i></i>':''}</div>` + I('down2',13,+this.a('cap',17)); }
});

def('design-dock', class extends Base {
  css() { return `:host{width:278px;height:473px;display:flex;flex-direction:column;padding-top:2px;flex:none;overflow:hidden}
   .sec{display:flex;border-top:1px solid #fff}.one{height:226px;border-bottom:1px solid #a0a0a0}.two{height:224px;flex:none}
   tool-strip{width:27px;border-right:1px solid #a0a0a0;padding-top:3px}.two tool-strip{padding-top:2px}
   .body{flex:1;display:flex;flex-direction:column;min-width:0}.view{height:21px;display:flex;align-items:center;padding-left:3px}
   .radio{width:13px;height:13px;border:1px solid #666;border-radius:50%;background:#fff;display:grid;place-items:center;flex:none}.radio.on::after{content:"";width:7px;height:7px;border-radius:50%;background:#222}
   .tree{border:1px solid #828790;background:#fff;display:flex;flex-direction:column;overflow:hidden;min-height:0;flex:1;margin-right:1px}
   .head{height:24px;border-bottom:1px solid #d8e6f5;padding-left:4px;display:flex;align-items:center;background:#fcfcfc;flex:none}
   .h{height:16px;margin-top:auto;background:#f0f0f0;display:flex;align-items:center}.h .t{flex:1;height:16px;background:#cdcdcd;margin-right:13px;display:grid;place-items:center}.h .t i{width:10px;height:9px;background:#f0f0f0}
   .grip{height:4px;margin-left:92px;width:88px;flex:none;background:repeating-linear-gradient(90deg,#c6c6c6 0 2px,transparent 2px 4px)}
   .run{height:28px;display:flex;align-items:center;padding-left:6px;gap:8px}.cols{flex-direction:row}.rows{flex:1;min-width:0;overflow:hidden}.rows .head{padding-top:1px}.rows>.list{display:flex;flex-direction:column}`; }
  render() { return `<dock-title label="Design" w="33" style="width:277px"></dock-title>
  <div class="sec one"><tool-strip items="newSource addSource addCopy - hierGrey - remove - chipCheck docCheck - columns"></tool-strip>
   <div class="body"><div class="view">${T(26,'View:')}<i class="radio on" style="margin:0 8px 0 6px"></i>${I('impl')}<span style="width:2px"></span>${T(75,'Implementation')}<i class="radio" style="margin:0 7px 0 5px"></i>${I('sim')}<span style="width:3px"></span>${T(49,'Simulation')}</div>
   <div class="tree"><div class="head">${T(52,'Hierarchy')}</div>
    ${row(0,'','project',45,54,'logiclab_4')}${row(0,'-','chip',45,86,'xc7z010-1clg400')}
    ${row(1,'','verilog hier',81,148,'paritiy3_gen (paritiy3_gen.v)','sel single')}${row(1,'','verilogW',65,183,'paritiy3_gen_sop (paritiy3_gen_sop','last single')}
    <div class="h">${I('left2',17,14)}<div class="t"><i></i></div>${I('right2',17,14)}</div></div></div></div>
  <div class="grip"></div>
  <div class="sec two"><tool-strip items="play - procGo procX - procOk - columns"></tool-strip>
   <div class="body"><div class="run">${I('cycle')}${T(107,'No Processes Running')}</div>
   <div class="tree cols"><div class="rows"><div class="head">${T(121,'Processes: paritiy3_gen')}</div><div class="list">
    ${row(0,'','sigma',61,136,'Design Summary/Reports')}${row(0,'+','tools',61,78,'Design Utilities')}${row(0,'+','tools',61,86,'User Constraints')}
    ${row(0,'-','cycle check',61,86,'Synthesize - XST')}${row(1,'','rtl',81,106,'View RTL Schematic')}${row(1,'','tech',81,147,'View Technology Schematic','sel')}
    ${row(1,'','cycle check',81,71,'Check Syntax')}${row(1,'','cycle',81,146,'Generate Post-Synthesis Si...','last')}
    ${row(0,'+','cycle',61,97,'Implement Design')}${row(0,'','cycle',61,145,'Generate Programming File')}${row(0,'+','config',61,126,'Configure Target Device')}
   </div></div><scroll-y len="132" grip></scroll-y></div></div></div>`; }
});

def('schematic-canvas', class extends Base {
  css() { return `:host{flex:1;background:#000;border:2px solid #8a8a8a;border-width:1px 2px 0 2px;height:473px}svg{display:block}`; }
  render() { return `<svg width="1055" height="472" viewBox="309 73 1055 472"><rect x="500.500" y="109.500" width="552" height="398" fill="none" stroke="#8c8c8c"/>
   <path d="M1029.500 138v342M1025 208.500h21" stroke="#00e000" fill="none"/><path d="M1030.500 138v342" stroke="#008000"/><path d="M1024 137h7v8zM1024 480h7v-8z" fill="#00ff00"/><path d="M1037.500 206v-3.500h2" stroke="#00c000" fill="none"/></svg>`; }
});

def('tab-item', class extends Base {
  css() { const on = this.hasAttribute('on'); return `:host{width:${this.a('width')}px;height:${on?23:22}px;display:flex;align-items:center;flex:none;border:1px solid #a0a0a0;border-top:0;padding-left:${this.a('pl',4)}px;background:${on?'#fff':'linear-gradient(#ececec,#e2e2e2)'}}
   :host([on]){padding-top:1px}:host([doc]){border-bottom:2px solid #2e86e8;background:#f2f2f2;height:23px}ui-icon+fit-text{margin-left:${this.a('gap',10)}px}fit-text+ui-icon{margin-left:11px}`; }
  render() { return (this.a('icon') ? I(this.a('icon'), +this.a('isize',16), +this.a('isize',16)-1) : '') + T(this.a('w'), this.a('label')) + (this.a('end') ? I(this.a('end'),14) : ''); }
});
const tab = (width,icon,w,label,x='') => `<tab-item width="${width}" icon="${icon}" w="${w}" label="${label}" ${x}></tab-item>`;

def('tab-strip', class extends Base {
  css() { return `:host{height:29px;display:flex;border-top:1px solid #a0a0a0;padding-left:2px;align-items:flex-start}.gap{flex:1}.n{width:13px;height:21px;border:1px solid #b4b4b4;display:grid;place-items:center;margin-left:3px;background:#f4f4f4}`; }
  render() { return `${tab(62,'ise',25,'Start','pl=4 gap=9')}${tab(77,'designTab',33,'Design','on pl=7 gap=9')}${tab(62,'files',22,'Files','pl=4 gap=9')}${tab(72,'libs',41,'Libraries','pl=5 gap=5')}
   <span style="width:6px"></span>${tab(58,'',57,'ary (Synthe','pl=0')}<span class="gap"></span>${tab(145,'star',92,'paritiy3_gen.ngc:1','pl=0 gap=10 isize=9 end=xGrey')}${tab(164,'tech',100,'paritiy3_gen (Tech1)','doc pl=5 gap=10 isize=15 end=xRed')}
   <div class="n" style="margin-left:2px"><svg width="6" height="8"><path d="M5 0v8L1 4z"/></svg></div><div class="n" style="border-right:0;width:14px"><svg width="6" height="8"><path d="M1 0v8l4-4z" fill="#aaa"/></svg></div>`; }
});

def('list-panel', class extends Base {
  css() { return `:host{width:${this.a('width')}px;height:64px;border:1px solid #828790;background:#fff;display:flex;overflow:hidden;flex:none}.m{flex:1;min-width:0}.h{height:24px;display:flex;align-items:center;justify-content:space-between;border-bottom:1px solid #dce8f5;border-right:1px solid #dce8f5;padding:0 10px 0 4px;background:#fcfcfc}`; }
  render() { const s = this.a('scroll'); return `<div class="m"><div class="h"><slot name="head"></slot></div><slot></slot></div>${s ? `<scroll-y cap="17" top="${s.split(' ')[0]}" len="${s.split(' ')[1]}"></scroll-y>` : ''}`; }
});

/* Rows slotted into the panels take their styles from this dock */
def('category-dock', class extends Base {
  css() { return `:host{height:109px;display:flex;flex-direction:column;padding-top:1px;overflow:hidden}.h{height:22px;display:flex;align-items:center;font-weight:700;padding:0 0 3px 246px}.h fit-text+fit-text{margin-left:687px}
   .p{display:flex;padding-left:4px}.r{display:flex;height:16px;align-items:center;padding-left:4px}.r span{width:327px}.sel{background:#e8e8e8}tree-row{top:-1px}`; }
  render() { return `<dock-title label="View by Category" w="85"></dock-title><div class="h">${T(94,'Design Objects o')}${T(74,'Instance: f11')}</div>
  <div class="p"><list-panel width="220" scroll="19 9"><div slot="head">${T(49,'Instances')}</div><div slot="head">${I('tri',12)}</div>
   ${row(0,'','nor',65,39,'f_OBUF','base=22 single')}${row(0,'','norSel',65,16,'f11','base=22 single sel last')}</list-panel>
   <list-panel width="221" style="margin-left:6px"><div slot="head">${T(22,'Pins')}</div>${row(0,'+','pins',45,64,'paritiy3_gen')}</list-panel>
   <list-panel width="220" style="margin-left:6px"></list-panel>
   <list-panel width="672" scroll="0 18" style="margin-left:13px"><div slot="head" style="padding-left:327px">${T(28,'Value')}</div>
   <div class="r"><span></span>${T(19,'lut3')}</div><div class="r sel"><span></span>${T(15,'f11')}</div><div class="r"><span style="width:327px">${T(55,'INITSTATE')}</span>${T(12,'69')}</div></list-panel></div>`; }
});

def('status-area', class extends Base {
  css() { return `:host{height:45px;border-top:1px solid #a0a0a0;display:flex;padding-left:2px;align-items:flex-start}.c{margin:25px 4px 0 auto;line-height:16px;font-size:12px}`; }
  render() { return `${tab(78,'console',39,'Console','pl=3')}${tab(71,'error',31,'Errors','pl=5 gap=9')}${tab(87,'warn',46,'Warnings','pl=5 gap=10')}${tab(133,'find',94,'Find in Files Results','pl=6 gap=8')}${tab(129,'grid',86,'View by Category','on pl=7 gap=10')}<div class="c">${T(47,'[892,304]')}</div>`; }
});

def('task-bar', class extends Base {
  css() { return `:host{height:40px;display:flex;align-items:center;border-top:1px solid #2a7ba8;color:#fff;position:relative;overflow:hidden;background:linear-gradient(#2e98c9,#2888bd)}
   .deco{position:absolute;inset:0;display:block}.i{position:relative;height:39px;display:grid;place-items:center;flex:none;left:-1px}
   .b{left:0;border:1px solid #8fc6e4;background:rgba(255,255,255,.19);outline:1px solid #236f9b;height:38px}
   .on{background:linear-gradient(#79b5d9,#9dc6df);border-color:#fff}.st{width:8px;height:38px;border:1px solid #8fc6e4;border-left:0;background:linear-gradient(90deg,#5aa5cf 3px,#8fc6e4 3px 4px,#5aa5cf 4px);position:relative}
   .tray{position:relative;margin-left:auto;display:flex;align-items:center}.clock{text-align:center;line-height:17px;display:flex;flex-direction:column;align-items:center;width:56px;margin:0 16px 0 13px}`; }
  render() {
    const it = (n,w,h,box,ml,cls='') => `<div class="i ${cls}" style="width:${box}px;margin-left:${ml}px">${I(n,w,h)}</div>`;
    return `<svg class="deco" width="1366" height="40"><path d="M203 0h15l-28 40h-17zM528 0h15l-31 40h-20zM954 0h22l-36 40h-22z" fill="#27566a" opacity=".9"/></svg>
    ${it('windows',27,27,27,12)}${it('ie',31,31,31,66-39)}${it('explorer',32,29,50,17,'b')}<i class="st"></i>
    ${it('ppt',30,30,30,18)}${it('vlc',27,30,27,34)}${it('media',28,26,58,19,'b')}${it('km',32,28,32,17)}${it('chrome',31,31,31,31)}${it('excel',30,30,30,31)}
    ${it('firefox',31,31,58,18,'b')}${it('notepad',31,29,58,4,'b')}${it('skype',29,30,58,4,'b')}${it('ise',32,28,58,4,'b on')}
    <div class="tray">${I('trayUp',10)}<span style="width:12px"></span>${I('battery',16)}<span style="width:8px"></span>${I('speaker',16)}<span style="width:9px"></span>${I('signal',16)}<span style="width:13px"></span>${T(23,'ENG')}<div class="clock">${T(47,'10:53 AM')}${T(50,'11/3/2020')}</div></div>`;
  }
});

def('karnaugh-map', class extends Base {
  css() { return `:host{width:340px;padding:29px 0 0 29px;font-size:11px;line-height:14px}
   .top{display:flex;height:17px}.cols{display:grid;grid-template-columns:repeat(4,60px);margin-left:42px;height:15px;align-items:center;justify-items:center}.cols fit-text{margin-left:-2px}
   .m{display:flex}.rows{width:42px;flex:none;display:grid;grid-template-rows:60px 60px;align-items:center;justify-items:end;padding-right:4px}
   .g{display:grid;grid-template-columns:repeat(4,60px);width:241px;height:121px;flex:none;border-left:1px solid #000;border-top:1px solid #000;box-shadow:4px 4px 0 #333340;clip-path:polygon(0 0,100% 0,100% 4px,calc(100% + 5px) 4px,calc(100% + 5px) calc(100% + 5px),4px calc(100% + 5px),4px 100%,0 100%)}
   .g i{height:60px;border-right:1px solid #000;border-bottom:1px solid #000}`; }
  render() { const c = 'grgrrgrg'; return `<div class="top"><span style="width:1px"></span>${T(11,'I0')}<span style="width:16px"></span>${T(24,'I1 I2')}</div>
   <div class="cols">${['00','01','11','10'].map(s => T(12,s)).join('')}</div>
   <div class="m"><div class="rows">${T(6,'0')}${T(6,'1')}</div><div class="g">${[...c].map(k => `<i style="background:${k==='g'?'#008000':'#f00'}"></i>`).join('')}</div></div>`; }
});

def('lut-dialog', class extends Base {
  css() { return `:host{position:absolute;left:339px;top:58px;width:688px;height:611px;background:#6bc1f1;border:1px solid #4a93bd;padding:0 6px 6px;display:flex;flex-direction:column;color:#000;box-shadow:0 1px 4px rgba(0,0,0,.25)}
   .t{height:29px;display:flex;align-items:center;flex:none;padding-left:3px;color:#333;font-size:15px}.t .n{margin:-2px 0 0 281px}.x{width:31px;height:20px;background:#c75050;display:grid;place-items:center;margin:0 0 auto auto}svg{display:block}
   .c{flex:1;background:#f0f0f0;border:1px solid #589fc9;display:flex;flex-direction:column;font-size:11px}
   .h{height:69px;display:flex;flex-direction:column;align-items:center;justify-content:flex-end;padding-bottom:8px;padding-right:2px}.big{font:700 16px/20px "DejaVu Sans","Noto Sans",sans-serif;margin-bottom:-1px}.s{line-height:15px;height:15px}
   .tabs{display:flex;align-items:flex-end;height:23px;margin:0 0 -1px 24px;position:relative}.tabs div{height:20px;border:1px solid #a9a9a9;margin-right:-1px;display:grid;place-items:center;background:linear-gradient(#f0f0f0,#e6e6e6);padding:0 4px 1px 0}.tabs .on{height:22px;background:#fff;border-bottom:0;padding-right:2px}
   .pane{width:626px;height:411px;margin-left:22px;background:#fff;border:1px solid #a9a9a9;flex:none;position:relative}.tabs{z-index:1}
   .line{position:absolute;left:41px;top:30px}.f{display:flex;gap:8px;margin:16px 0 0 257px}.f div{width:75px;height:23px;border:1px solid #a9a9a9;background:linear-gradient(#f0f0f0,#e4e4e4);display:grid;place-items:center;padding-right:2px}.f .ok{border-color:#3399ff}`; }
  render() { return `<div class="t">${I('ise',16,15)}<span class="n">${T(74,'LUT Dialog')}</span><div class="x"><svg width="8" height="8"><path d="M.5.5l7 7M7.500.5l-7 7" stroke="#fff" stroke-width="1.800"/></svg></div></div>
   <div class="c"><div class="h"><div class="big">${T(76,'LUT3_69')}</div><div class="s">${T(48,'INIT = 69')}</div></div>
   <div class="tabs"><div style="width:73px">${T(49,'Schematic')}</div><div style="width:69px">${T(43,'Equation')}</div><div style="width:75px">${T(50,'TruthTable')}</div><div class="on" style="width:97px">${T(70,'Karnaugh Map')}</div></div>
   <div class="pane"><karnaugh-map></karnaugh-map><svg class="line" width="32" height="32"><path d="M1 1l30 30" stroke="#000" shape-rendering="crispEdges"/></svg></div>
   <div class="f"><div class="ok">${T(15,'OK')}</div><div>${T(22,'Help')}</div></div></div>`; }
});

def('activation-note', class extends Base {
  css() { return `:host{position:absolute;left:1055px;top:650px;color:rgba(150,150,150,.62);pointer-events:none}.a{font-size:19px;line-height:24px}.b{font-size:14px;line-height:22px}`; }
  render() { return `<div class="a">${T(157,'Activate Windows')}</div><div class="b">${T(255,'Go to PC settings to activate Windows.')}</div>`; }
});

def('ise-desktop', class extends Base {
  css() { return `:host{width:1366px;height:768px;position:relative;overflow:hidden;display:flex;flex-direction:column;background:#f0f0f0}
   .mid{display:flex;height:473px}.side{width:29px;flex:none;padding-top:2px;display:flex}.side i{width:4px;height:162px;margin-top:164px;background:repeating-linear-gradient(#c6c6c6 0 2px,transparent 2px 4px)}.side tool-strip{width:24px}`; }
  render() { return `<title-bar></title-bar><menu-bar></menu-bar><tool-bar></tool-bar>
   <div class="mid"><design-dock></design-dock><div class="side"><i></i><tool-strip items="pointer *spread - stars - fwd back - boxWin boxX chipIn chipInG - gate label - up left right history - pair pin"></tool-strip></div><schematic-canvas></schematic-canvas></div>
   <tab-strip></tab-strip><category-dock></category-dock><status-area></status-area><task-bar></task-bar><lut-dialog></lut-dialog><activation-note></activation-note>`; }
});
</script>
</body>
</html>
